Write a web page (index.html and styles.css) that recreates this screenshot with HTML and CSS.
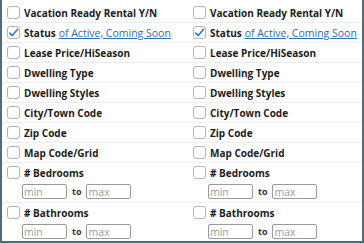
FILE: index.html
```html
<!DOCTYPE html>
<html lang="en">
<head>
    <meta charset="UTF-8">
    <meta name="viewport" content="width=device-width, initial-scale=1.0">
    <title>Search Fields</title>
    <link rel="stylesheet" href="styles.css">
</head>
<body>
    <div class="panel">
        <!-- Left column -->
        <ul class="field-list">
            <li class="field"><span class="box"></span><span class="label">Vacation Ready Rental Y/N</span></li>
            <li class="field"><span class="box checked"><svg viewBox="0 0 13 13" width="13" height="13"><polyline points="2.3,6.6 5.2,9.6 11,2.8" fill="none" stroke="#2f7ad8" stroke-width="1.6"/></svg></span><span class="label">Status</span>&nbsp;<a class="values" href="#">of Active, Coming Soon</a></li>
            <li class="field"><span class="box"></span><span class="label">Lease Price/HiSeason</span></li>
            <li class="field"><span class="box"></span><span class="label">Dwelling Type</span></li>
            <li class="field"><span class="box"></span><span class="label">Dwelling Styles</span></li>
            <li class="field"><span class="box"></span><span class="label">City/Town Code</span></li>
            <li class="field"><span class="box"></span><span class="label">Zip Code</span></li>
            <li class="field"><span class="box"></span><span class="label">Map Code/Grid</span></li>
            <li class="field range">
                <div class="range-head"><span class="box"></span><span class="label"># Bedrooms</span></div>
                <div class="range-inputs"><input type="text" placeholder="min"><span class="to">to</span><input type="text" placeholder="max"></div>
            </li>
            <li class="field range">
                <div class="range-head"><span class="box"></span><span class="label"># Bathrooms</span></div>
                <div class="range-inputs"><input type="text" placeholder="min"><span class="to">to</span><input type="text" placeholder="max"></div>
            </li>
        </ul>

        <!-- Right column -->
        <ul class="field-list">
            <li class="field"><span class="box"></span><span class="label">Vacation Ready Rental Y/N</span></li>
            <li class="field"><span class="box checked"><svg viewBox="0 0 13 13" width="13" height="13"><polyline points="2.3,6.6 5.2,9.6 11,2.8" fill="none" stroke="#2f7ad8" stroke-width="1.6"/></svg></span><span class="label">Status</span>&nbsp;<a class="values" href="#">of Active, Coming Soon</a></li>
            <li class="field"><span class="box"></span><span class="label">Lease Price/HiSeason</span></li>
            <li class="field"><span class="box"></span><span class="label">Dwelling Type</span></li>
            <li class="field"><span class="box"></span><span class="label">Dwelling Styles</span></li>
            <li class="field"><span class="box"></span><span class="label">City/Town Code</span></li>
            <li class="field"><span class="box"></span><span class="label">Zip Code</span></li>
            <li class="field"><span class="box"></span><span class="label">Map Code/Grid</span></li>
            <li class="field range">
                <div class="range-head"><span class="box"></span><span class="label"># Bedrooms</span></div>
                <div class="range-inputs"><input type="text" placeholder="min"><span class="to">to</span><input type="text" placeholder="max"></div>
            </li>
            <li class="field range">
                <div class="range-head"><span class="box"></span><span class="label"># Bathrooms</span></div>
                <div class="range-inputs"><input type="text" placeholder="min"><span class="to">to</span><input type="text" placeholder="max"></div>
            </li>
        </ul>
    </div>
</body>
</html>
```

FILE: styles.css
```css
html, body {
    margin: 0;
    padding: 0;
    background: #dfe3e8;
}

body {
    font-family: "Open Sans", "DejaVu Sans", sans-serif;
    font-size: 11px;
    color: #1b1b1b;
}

.panel {
    width: 360px;
    height: 238px;
    background: #fff;
    border: 2px solid #56687b;
    border-top: none;
    display: grid;
    grid-template-columns: 186px 1fr;
    padding-top: 3px;
    overflow: hidden;
}

.field-list {
    list-style: none;
    margin: 0;
    padding: 0;
}

.field {
    height: 19px;
    border-bottom: 1px solid #ececec;
    display: flex;
    align-items: center;
    padding-left: 5px;
    white-space: nowrap;
}

.field.range {
    height: 39px;
    flex-direction: column;
    align-items: flex-start;
    justify-content: flex-start;
}

.field.range:last-child {
    border-bottom: none;
}

.range-head {
    height: 19px;
    display: flex;
    align-items: center;
}

.range-inputs {
    display: flex;
    align-items: center;
    padding-left: 15px;
    margin-top: 2px;
}

.range-inputs input {
    width: 45px;
    height: 15px;
    box-sizing: border-box;
    border: 1px solid #9a9a9a;
    border-radius: 2px;
    padding: 0 1px;
    font-family: "Open Sans", sans-serif;
    font-size: 10.5px;
    color: #333;
    outline: none;
}

.range-inputs input::placeholder {
    color: #9b9b9b;
}

.to {
    font-size: 9px;
    font-weight: 700;
    color: #333;
    margin: 0 5px;
}

.box {
    flex: none;
    width: 13px;
    height: 13px;
    box-sizing: border-box;
    border: 1px solid #b4b4b4;
    border-radius: 3px;
    margin-right: 4px;
    position: relative;
    background: #fff;
}

.box svg {
    position: absolute;
    left: -1px;
    top: -1px;
}

.label {
    font-size: 10px;
    font-weight: 700;
}

.values {
    font-size: 10.5px;
    color: #2d6cb5;
    text-decoration: underline;
}
```
